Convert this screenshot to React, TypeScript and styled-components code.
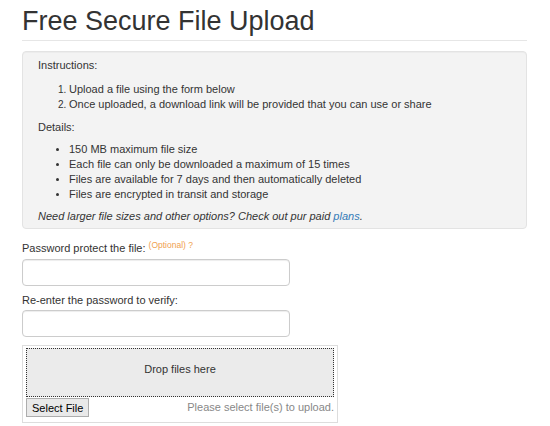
import React, {FC} from 'react';
import styled, {createGlobalStyle} from 'styled-components';

const GlobalStyle = createGlobalStyle`
  body {
    margin: 0;
    background: #fff;
    color: #333;
    font-family: 'Liberation Sans', Arial, sans-serif;
    font-size: 11px;
    line-height: 15px;
  }
`;

const instructions = [
  'Upload a file using the form below',
  'Once uploaded, a download link will be provided that you can use or share',
];

const details = [
  '150 MB maximum file size',
  'Each file can only be downloaded a maximum of 15 times',
  'Files are available for 7 days and then automatically deleted',
  'Files are encrypted in transit and storage',
];

const App: FC = () => {
  return (
    <StyledPage>
      <GlobalStyle />
      <StyledTitle>Free Secure File Upload</StyledTitle>

      <StyledWell>
        <StyledPara $gap={9}>Instructions:</StyledPara>
        <StyledList as="ol" $gap={8}>
          {instructions.map((item) => (
            <li key={item}>{item}</li>
          ))}
        </StyledList>
        <StyledPara $gap={7}>Details:</StyledPara>
        <StyledList $gap={7}>
          {details.map((item) => (
            <li key={item}>{item}</li>
          ))}
        </StyledList>
        <StyledNote>
          Need larger file sizes and other options? Check out pur paid{' '}
          <StyledLink href="#">plans</StyledLink>.
        </StyledNote>
      </StyledWell>

      <StyledGroup $top={12}>
        <StyledLabel>
          Password protect the file: <StyledOptional>(Optional) ?</StyledOptional>
        </StyledLabel>
        <StyledInput type="password" />
      </StyledGroup>

      <StyledGroup $top={7}>
        <StyledLabel>Re-enter the password to verify:</StyledLabel>
        <StyledInput type="password" />
      </StyledGroup>

      <StyledUploader>
        <StyledDropZone>Drop files here</StyledDropZone>
        <StyledFooter>
          <StyledButton type="button">Select File</StyledButton>
          <StyledStatus>Please select file(s) to upload.</StyledStatus>
        </StyledFooter>
      </StyledUploader>
    </StyledPage>
  );
};

const StyledPage = styled.div`
  width: 505px;
  padding: 0 0 0 22px;
`;

const StyledTitle = styled.h1`
  margin: 5px 0 0;
  padding-bottom: 3px;
  border-bottom: 1px solid #e6e6e6;
  font-size: 27px;
  font-weight: normal;
  line-height: 32px;
  color: #333;
`;

const StyledWell = styled.div`
  margin-top: 10px;
  padding: 6px 15px 4px;
  background: #f3f3f3;
  border: 1px solid #e3e3e3;
  border-radius: 4px;
  box-shadow: inset 0 1px 1px rgba(0, 0, 0, 0.03);
`;

const StyledPara = styled.p<{$gap: number}>`
  margin: 0 0 ${(p) => p.$gap}px;
`;

const StyledList = styled.ul<{$gap: number}>`
  margin: 0 0 ${(p) => p.$gap}px;
  padding-left: 31px;

  li::marker {
    font-size: 10px;
  }
`;

const StyledNote = styled.p`
  margin: 0;
  font-style: italic;
`;

const StyledLink = styled.a`
  color: #337ab7;
  text-decoration: none;
`;

const StyledGroup = styled.div<{$top: number}>`
  margin-top: ${(p) => p.$top}px;
`;

const StyledLabel = styled.label`
  display: block;
  margin-bottom: 2px;
`;

const StyledOptional = styled.span`
  position: relative;
  top: -4px;
  font-size: 8.5px;
  color: #f0a050;
`;

const StyledInput = styled.input`
  display: block;
  box-sizing: border-box;
  width: 268px;
  height: 27px;
  margin: 0;
  padding: 4px 6px;
  border: 1px solid #ccc;
  border-radius: 4px;
  box-shadow: inset 0 1px 1px rgba(0, 0, 0, 0.075);
  font: inherit;
`;

const StyledUploader = styled.div`
  box-sizing: border-box;
  width: 316px;
  margin-top: 8px;
  padding: 2px 3px 5px;
  border: 1px solid #ddd;
`;

const StyledDropZone = styled.div`
  box-sizing: border-box;
  height: 49px;
  display: flex;
  align-items: center;
  justify-content: center;
  padding-bottom: 7px;
  background: #ebebeb;
  border: 1px dotted #333;
`;

const StyledFooter = styled.div`
  display: flex;
  align-items: center;
  justify-content: space-between;
  margin-top: 1px;
`;

const StyledButton = styled.button`
  box-sizing: border-box;
  height: 19px;
  padding: 0 5px;
  background: #e9e9e9;
  border: 1px solid #adadad;
  border-radius: 0;
  font-family: inherit;
  font-size: 11px;
  color: #000;
`;

const StyledStatus = styled.span`
  color: #888;
  line-height: 15px;
`;

export default App;
